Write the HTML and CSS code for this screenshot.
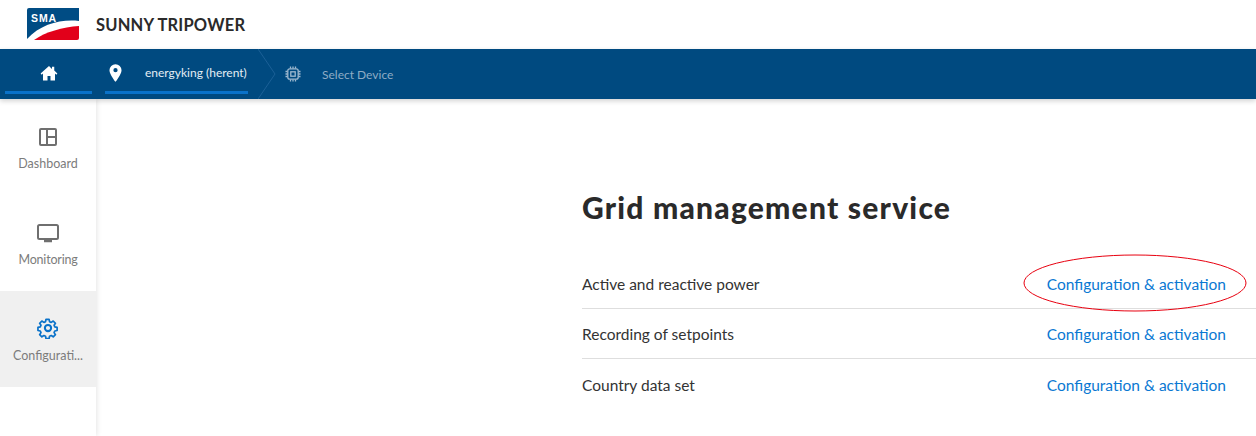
FILE: index.html
```html
<!DOCTYPE html>
<html lang="en">
<head>
<meta charset="utf-8">
<title>Sunny Tripower</title>
<link rel="stylesheet" href="styles.css">
</head>
<body>
<header class="top">
  <svg class="logo" viewBox="0 0 52 32" width="52" height="32">
    <path d="M2 0H52V13C34 11 14 16 0 31V2A2 2 0 0 1 2 0Z" fill="#004c84"/>
    <path d="M7 32C18 24 36 19 52 18V30A2 2 0 0 1 50 32Z" fill="#e2001a"/>
    <text x="4" y="13.500" class="logo-text">SMA</text>
  </svg>
  <span class="product">SUNNY TRIPOWER</span>
</header>
<nav class="bar">
  <div class="crumb crumb-home">
    <svg viewBox="0 0 24 24" width="18" height="18"><path d="M12 2.500 0.800 12.600l1.500 1.600L4 12.700V22h6v-6h4v6h6v-9.300l1.700 1.500 1.500-1.600-4.200-3.800V3.500h-3v3.100z" fill="#fff"/></svg>
  </div>
  <div class="crumb crumb-site">
    <svg viewBox="0 0 14 19" width="13" height="18"><path fill-rule="evenodd" d="M7 0a6.500 6.500 0 0 0-6.500 6.500C.5 11 7 19 7 19s6.500-8 6.500-12.500A6.500 6.500 0 0 0 7 0zm0 4.200a2.300 2.300 0 1 1 0 4.600 2.300 2.300 0 0 1 0-4.600z" fill="#fff"/></svg>
    <span class="crumb-label">energyking (herent)</span>
  </div>
  <svg class="chevron" viewBox="0 0 18 50" width="18" height="50"><path d="M0 0 17 25 0 50" fill="none" stroke="#1b6096" stroke-width="1"/></svg>
  <div class="crumb-device">
    <svg viewBox="0 0 16 16" width="16" height="16" fill="none" stroke="#9fbad0" stroke-width="1.300"><rect x="2.800" y="2.800" width="10.400" height="10.400" rx="2"/><rect x="5.800" y="5.800" width="4.400" height="4.400"/><path d="M5.500 0.500v2M8 0.500v2M10.500 0.500v2M5.500 13.500v2M8 13.500v2M10.500 13.500v2M0.500 5.500h2M0.500 8h2M0.500 10.500h2M13.500 5.500h2M13.500 8h2M13.500 10.500h2"/></svg>
    <span class="device-label">Select Device</span>
  </div>
</nav>
<div class="shell">
  <aside class="side">
    <div class="side-item">
      <svg viewBox="0 0 20 20" width="20" height="20" fill="none" stroke="#6f6f6f" stroke-width="2"><rect x="2" y="2" width="16" height="16" rx="1"/><path d="M9 2v16M9 10h9"/></svg>
      <span>Dashboard</span>
    </div>
    <div class="side-item">
      <svg viewBox="0 0 24 20" width="24" height="20" fill="none" stroke="#6f6f6f" stroke-width="2"><rect x="2" y="2" width="20" height="14" rx="1.500"/><path d="M8 18h8" stroke-width="2.500"/></svg>
      <span class="side-narrow">Monitoring</span>
    </div>
    <div class="side-item side-active">
      <svg viewBox="0 0 24 24" width="22" height="22" fill="none" stroke="#0a72c9" stroke-width="2.200" stroke-linejoin="round"><circle cx="12" cy="12" r="3.400"/><path d="M10 1.500h4l.6 3 2.100.9 2.600-1.700 2.800 2.800-1.700 2.600.9 2.100 3 .6v4l-3 .6-.9 2.100 1.700 2.600-2.800 2.800-2.600-1.700-2.100.9-.6 3h-4l-.6-3-2.100-.9-2.600 1.700-2.800-2.800 1.700-2.600-.9-2.100-3-.6v-4l3-.6.9-2.100-1.700-2.600 2.800-2.800 2.600 1.700 2.100-.9z" transform="translate(1.300 1.300) scale(.85)"/></svg>
      <span>Configurati...</span>
    </div>
  </aside>
  <main class="content">
    <h1 class="title">Grid management service</h1>
    <div class="row row-first">
      <span>Active and reactive power</span>
      <a class="link">Configuration &amp; activation
        <svg class="mark" viewBox="0 0 224 58" width="224" height="58"><ellipse cx="112" cy="29" rx="111" ry="28" fill="none" stroke="#e8000f" stroke-width="1"/></svg>
      </a>
    </div>
    <div class="row">
      <span>Recording of setpoints</span>
      <a class="link">Configuration &amp; activation</a>
    </div>
    <div class="row row-last">
      <span>Country data set</span>
      <a class="link">Configuration &amp; activation</a>
    </div>
  </main>
</div>
</body>
</html>
```
FILE: styles.css
```css
* { box-sizing: border-box; }
html, body { margin: 0; height: 436px; overflow: hidden; background: #fff; }
body { font-family: Lato, "Liberation Sans", sans-serif; color: #2b2b2b; }

.top { height: 49px; display: flex; align-items: center; padding: 0 0 0 27px; gap: 17px; }
.logo { margin-top: -1px; flex: none; }
.logo-text { font: 700 10.500px "Liberation Sans", sans-serif; letter-spacing: 0.9px; fill: #fff; }
.product { font-size: 16.500px; font-weight: 700; letter-spacing: 0.2px; color: #2a2a2a; }

.bar { height: 50px; background: #004a80; display: flex; align-items: stretch; padding-left: 5px; position: relative; z-index: 2; box-shadow: 0 2px 5px rgba(0,0,0,.18); }
.crumb { height: 45px; border-bottom: 3px solid #0a72c9; display: flex; align-items: center; }
.crumb-home { width: 87px; justify-content: center; padding-top: 5px; }
.crumb-site { width: 143px; margin-left: 13px; padding: 5px 0 0 4px; }
.crumb-label { margin-left: 23px; font-size: 12px; color: #e4edf4; white-space: nowrap; }
.chevron { margin-left: 10px; flex: none; }
.crumb-device { display: flex; align-items: center; margin-left: 9px; }
.device-label { margin-left: 21px; font-size: 12px; color: #8eacc5; }

.shell { display: flex; height: 337px; }
.side { width: 96px; flex: none; background: #fff; box-shadow: 1px 0 5px rgba(0,0,0,.1); }
.side-item { height: 96px; display: flex; flex-direction: column; align-items: center; padding-top: 28px; gap: 9px; font-size: 12.500px; color: #7c7c7c; }
.side-narrow { letter-spacing: -0.2px; }
.side-active { background: #f0f0f0; padding-top: 26px; }

.content { flex: 1; padding: 88px 0 0 486px; }
.title { margin: 0 0 33px; font-size: 30px; font-weight: 900; line-height: 40px; letter-spacing: 1.220px; color: #2a2a2a; }
.row { display: flex; justify-content: space-between; align-items: center; height: 50px; padding-right: 30px; border-bottom: 1px solid #dedede; font-size: 15.500px; color: #333; }
.row-last { border-bottom: 0; padding-top: 1px; height: 51px; }
.row-first { height: 49px; }
.link { color: #0a78d2; position: relative; white-space: nowrap; }
.mark { position: absolute; right: -21px; top: -21px; }
```
